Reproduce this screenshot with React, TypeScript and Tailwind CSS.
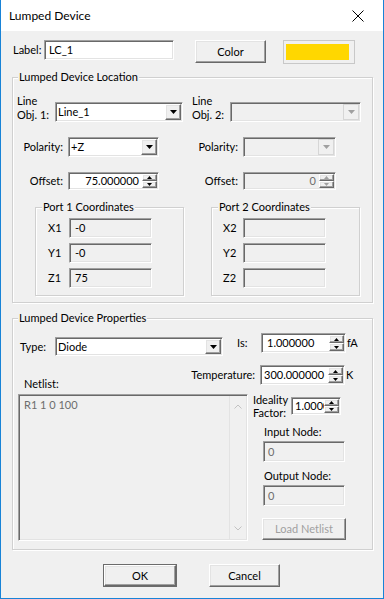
import type { ReactNode } from 'react';

const sunken =
  'border border-t-[#a0a0a0] border-l-[#a0a0a0] border-r-white border-b-white shadow-[inset_1px_1px_0_#696969,inset_-1px_-1px_0_#e3e3e3]';
const raised =
  'border border-t-white border-l-white border-r-[#696969] border-b-[#696969] shadow-[inset_-1px_-1px_0_#a0a0a0,inset_1px_1px_0_#e3e3e3] bg-[#f0f0f0]';

function Arrow({ up = false, small = false, disabled = false }: { up?: boolean; small?: boolean; disabled?: boolean }) {
  const w = small ? 5 : 7;
  const h = small ? 3 : 4;
  const pts = up ? `${w / 2},0 ${w},${h} 0,${h}` : `0,0 ${w},0 ${w / 2},${h}`;
  return (
    <svg width={w} height={h} viewBox={`0 0 ${w} ${h}`}>
      <polygon points={pts} fill={disabled ? '#a0a0a0' : '#000'} />
    </svg>
  );
}

function Combo({ className, value, disabled }: { className: string; value?: string; disabled?: boolean }) {
  return (
    <div className={`flex ${sunken} ${disabled ? 'bg-[#f0f0f0]' : 'bg-white'} ${className}`}>
      <div className="flex-1 flex items-center pl-[2px] overflow-hidden whitespace-nowrap">{value}</div>
      <div
        className={`w-[16px] m-[1px] flex items-center justify-center ${
          disabled ? 'border border-[#d6d6d6] bg-[#f0f0f0]' : raised
        }`}
      >
        <Arrow disabled={disabled} />
      </div>
    </div>
  );
}

function Spin({
  className,
  value,
  disabled,
  right,
  pad = 'pl-[4px]',
}: {
  className: string;
  value: string;
  disabled?: boolean;
  right?: boolean;
  pad?: string;
}) {
  return (
    <div className={`flex ${sunken} ${disabled ? 'bg-[#f0f0f0] text-[#6d6d6d]' : 'bg-white'} ${className}`}>
      <div className={`flex-1 flex items-center overflow-hidden whitespace-nowrap ${right ? 'justify-end pr-[3px]' : pad}`}>
        {value}
      </div>
      <div className="w-[15px] my-[1px] mr-[1px] flex flex-col">
        <div className={`flex-1 flex items-center justify-center ${raised}`}>
          <Arrow up small disabled={disabled} />
        </div>
        <div className={`flex-1 flex items-center justify-center ${raised}`}>
          <Arrow small disabled={disabled} />
        </div>
      </div>
    </div>
  );
}

function Field({ className, value, gray, pad = 'pl-[5px]' }: { className: string; value?: string; gray?: boolean; pad?: string }) {
  return (
    <div className={`flex items-center ${sunken} ${gray ? 'bg-[#f0f0f0]' : 'bg-white'} ${pad} ${className}`}>
      {value}
    </div>
  );
}

function Btn({ className, children, disabled }: { className: string; children: ReactNode; disabled?: boolean }) {
  return (
    <div className={`flex items-center justify-center ${raised} ${disabled ? 'text-[#a0a0a0]' : ''} ${className}`}>
      {children}
    </div>
  );
}

function Group({ title, className, titleClass = 'ml-[5px]', children }: { title: string; className: string; titleClass?: string; children: ReactNode }) {
  return (
    <div className={`border border-[#d0d0d0] shadow-[inset_1px_1px_0_#fff,1px_1px_0_#fff] ${className}`}>
      <div className={`-mt-[8px] w-fit px-[1px] bg-[#f0f0f0] leading-[14px] ${titleClass}`}>{title}</div>
      {children}
    </div>
  );
}

function PortGroup({ n, values, className }: { n: number; values: string[]; className: string }) {
  const axes = ['X', 'Y', 'Z'];
  return (
    <Group title={`Port ${n} Coordinates`} titleClass="ml-[6px]" className={`w-[149px] h-[89px] ${className}`}>
      <div className="flex flex-col gap-[5px] mt-[4px]">
        {axes.map((a, i) => (
          <div key={a} className="flex items-center">
            <div className={n === 1 ? 'ml-[12px] w-[21px]' : 'ml-[11px] w-[20px]'}>
              {a}
              {n}
            </div>
            <Field className="w-[83px] h-[20px]" value={values[i]} gray />
          </div>
        ))}
      </div>
    </Group>
  );
}

export default function App() {
  return (
    <div className="w-[384px] h-[599px] flex flex-col border-x border-b border-[#1883d7] bg-[#f0f0f0] text-black text-[11px] font-['Lato',sans-serif] leading-[14px]">
      {/* title bar */}
      <div className="h-[31px] bg-white flex items-center justify-between pl-[8px] pr-[19px] shrink-0 text-[12px]">
        <span>Lumped Device</span>
        <svg width="12" height="12" viewBox="0 0 12 12">
          <path d="M0.5 0.5 L11.5 11.5 M11.5 0.5 L0.5 11.5" stroke="#000" strokeWidth="1" />
        </svg>
      </div>

      <div className="flex-1 flex flex-col pl-[11px] pr-[10px]">
        {/* label row */}
        <div className="flex items-start mt-[9px]">
          <div className="ml-[1px] w-[31px] h-[20px] flex items-center">Label:</div>
          <Field className="w-[130px] h-[20px]" value="LC_1" pad="pl-[4px]" />
          <Btn className="ml-[21px] w-[71px] h-[23px]">Color</Btn>
          <div className="ml-[17px] w-[72px] h-[24px] border border-[#c8c8c8] pl-[2px] pr-[5px] py-[3px] bg-[#f0f0f0]">
            <div className="w-full h-full bg-[#ffd700]" />
          </div>
        </div>

        {/* location */}
        <Group title="Lumped Device Location" className="mt-[13px] h-[226px]">
          <div className="grid grid-cols-[179px_180px]">
            <div className="flex flex-col">
              <div className="flex items-end mt-[10px]">
                <div className="ml-[4px] w-[38px]">
                  Line
                  <br />
                  Obj. 1:
                </div>
                <Combo className="w-[128px] h-[20px]" value="Line_1" />
              </div>
              <div className="flex items-center mt-[15px]">
                <div className="w-[55px] text-right pr-[5px]">Polarity:</div>
                <Combo className="w-[91px] h-[20px]" value="+Z" />
              </div>
              <div className="flex items-center mt-[15px]">
                <div className="w-[55px] text-right pr-[5px]">Offset:</div>
                <Spin className="w-[91px] h-[18px]" value="75.000000" right />
              </div>
              <PortGroup n={1} values={['-0', '-0', '75']} className="mt-[17px] ml-[22px]" />
            </div>

            <div className="flex flex-col">
              <div className="flex items-end mt-[10px]">
                <div className="w-[38px]">
                  Line
                  <br />
                  Obj. 2:
                </div>
                <Combo className="w-[131px] h-[20px]" disabled />
              </div>
              <div className="flex items-center mt-[15px]">
                <div className="w-[51px] text-right pr-[5px]">Polarity:</div>
                <Combo className="w-[93px] h-[20px]" disabled />
              </div>
              <div className="flex items-center mt-[15px]">
                <div className="w-[51px] text-right pr-[5px]">Offset:</div>
                <Spin className="w-[93px] h-[18px]" value="0" right disabled />
              </div>
              <PortGroup n={2} values={['', '', '']} className="mt-[17px] ml-[19px]" />
            </div>
          </div>
        </Group>

        {/* properties */}
        <Group title="Lumped Device Properties" className="mt-[15px] h-[232px]">
          <div className="flex items-start mt-[8px]">
            <div className="w-[42px] pl-[7px] h-[19px] mt-[4px] flex items-center">Type:</div>
            <Combo className="w-[168px] h-[19px] mt-[4px]" value="Diode" />
            <div className="w-[38px] h-[20px] flex items-center pl-[14px]">Is:</div>
            <Spin className="w-[85px] h-[20px]" value="1.000000" pad="pl-[5px]" />
            <div className="ml-[1px] h-[20px] flex items-center">fA</div>
          </div>

          <div className="flex">
            <div className="w-[237px] flex flex-col">
              <div className="mt-[21px] ml-[11px]">Netlist:</div>
              <div className={`ml-[5px] mt-[3px] w-[230px] h-[147px] flex ${sunken} bg-[#f0f0f0]`}>
                <div className="flex-1 pl-[5px] pt-[3px] text-[#6d6d6d]">R1 1 0 100</div>
                <div className="w-[17px] my-[1px] mr-[1px] flex flex-col items-center justify-between border-l border-[#e3e3e3] py-[8px]">
                  <svg width="8" height="5" viewBox="0 0 8 5">
                    <path d="M0.5 4.5 L4 1 L7.5 4.5" stroke="#c2c2c2" fill="none" />
                  </svg>
                  <svg width="8" height="5" viewBox="0 0 8 5">
                    <path d="M0.5 0.5 L4 4 L7.5 0.5" stroke="#c2c2c2" fill="none" />
                  </svg>
                </div>
              </div>
            </div>

            <div className="flex-1 flex flex-col">
              <div className="-ml-[70px] mt-[9px] pr-[14px] flex items-center justify-end">
                <div className="mr-[5px] whitespace-nowrap">Temperature:</div>
                <Spin className="w-[85px] h-[20px]" value="300.000000" pad="pl-[3px]" />
                <div className="ml-[1px] w-[12px]">K</div>
              </div>
              <div className="mt-[8px] flex items-center">
                <div className="ml-[3px] w-[38px] leading-[13px]">
                  Ideality
                  <br />
                  Factor:
                </div>
                <Spin className="w-[50px] h-[18px]" value="1.000000" pad="pl-[3px]" />
              </div>
              <div className="mt-[6px] ml-[14px]">Input Node:</div>
              <Field className="mt-[2px] ml-[13px] w-[82px] h-[21px] text-[#6d6d6d]" value="0" gray pad="pl-[4px]" />
              <div className="mt-[7px] ml-[14px]">Output Node:</div>
              <Field className="mt-[2px] ml-[13px] w-[82px] h-[21px] text-[#6d6d6d]" value="0" gray pad="pl-[4px]" />
              <Btn className="mt-[12px] ml-[12px] w-[84px] h-[22px]" disabled>
                Load Netlist
              </Btn>
            </div>
          </div>
        </Group>

        {/* dialog buttons */}
        <div className="flex mt-[14px]">
          <div className="ml-[91px] w-[74px] h-[23px] border border-[#6b6b6b] flex">
            <Btn className="flex-1">OK</Btn>
          </div>
          <Btn className="ml-[32px] w-[71px] h-[23px]">Cancel</Btn>
        </div>
      </div>
    </div>
  );
}
